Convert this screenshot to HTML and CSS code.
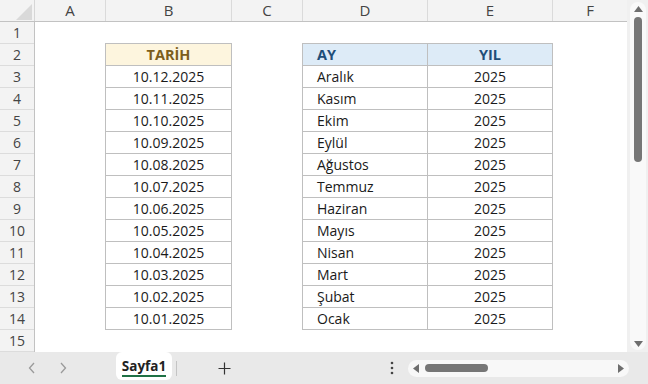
FILE: index.html
```html
<!DOCTYPE html>
<html lang="tr">
<head>
    <meta charset="UTF-8">
    <meta name="viewport" content="width=device-width, initial-scale=1.0">
    <title>Sayfa1</title>
    <link rel="stylesheet" href="styles.css">
</head>
<body>
    <div class="window">
        <div class="main">
            <div class="sheet">
                <!-- column letters -->
                <div class="colheads">
                    <div class="corner">
                        <svg width="16" height="16" viewBox="0 0 16 16"><polygon points="16,0 16,16 0,16" fill="#d9d9d9"/></svg>
                    </div>
                    <div class="colhead col-a">A</div>
                    <div class="colhead col-b">B</div>
                    <div class="colhead col-c">C</div>
                    <div class="colhead col-d">D</div>
                    <div class="colhead col-e">E</div>
                    <div class="colhead col-f">F</div>
                </div>

                <div class="body">
                    <div class="rowheads">
                        <div class="rowhead">1</div>
                        <div class="rowhead">2</div>
                        <div class="rowhead">3</div>
                        <div class="rowhead">4</div>
                        <div class="rowhead">5</div>
                        <div class="rowhead">6</div>
                        <div class="rowhead">7</div>
                        <div class="rowhead">8</div>
                        <div class="rowhead">9</div>
                        <div class="rowhead">10</div>
                        <div class="rowhead">11</div>
                        <div class="rowhead">12</div>
                        <div class="rowhead">13</div>
                        <div class="rowhead">14</div>
                        <div class="rowhead">15</div>
                    </div>

                    <div class="cells">
                        <!-- date table in column B -->
                        <div class="tbl tarih">
                            <div class="tc head-gold">TARİH</div>
                            <div class="tc">10.12.2025</div>
                            <div class="tc">10.11.2025</div>
                            <div class="tc">10.10.2025</div>
                            <div class="tc">10.09.2025</div>
                            <div class="tc">10.08.2025</div>
                            <div class="tc">10.07.2025</div>
                            <div class="tc">10.06.2025</div>
                            <div class="tc">10.05.2025</div>
                            <div class="tc">10.04.2025</div>
                            <div class="tc">10.03.2025</div>
                            <div class="tc">10.02.2025</div>
                            <div class="tc">10.01.2025</div>
                        </div>

                        <!-- month / year table in columns D-E -->
                        <div class="tbl months">
                            <div class="tc head-blue left">AY</div>
                            <div class="tc head-blue">YIL</div>
                            <div class="tc left">Aralık</div><div class="tc">2025</div>
                            <div class="tc left">Kasım</div><div class="tc">2025</div>
                            <div class="tc left">Ekim</div><div class="tc">2025</div>
                            <div class="tc left">Eylül</div><div class="tc">2025</div>
                            <div class="tc left">Ağustos</div><div class="tc">2025</div>
                            <div class="tc left">Temmuz</div><div class="tc">2025</div>
                            <div class="tc left">Haziran</div><div class="tc">2025</div>
                            <div class="tc left">Mayıs</div><div class="tc">2025</div>
                            <div class="tc left">Nisan</div><div class="tc">2025</div>
                            <div class="tc left">Mart</div><div class="tc">2025</div>
                            <div class="tc left">Şubat</div><div class="tc">2025</div>
                            <div class="tc left">Ocak</div><div class="tc">2025</div>
                        </div>
                    </div>
                </div>
            </div>

            <!-- vertical scrollbar -->
            <div class="vscroll">
                <div class="vtrack">
                    <svg width="9" height="6" viewBox="0 0 9 6"><polygon points="4.5,0 9,6 0,6" fill="#6e6e6e"/></svg>
                    <div class="vthumb"></div>
                    <svg class="vdown" width="9" height="6" viewBox="0 0 9 6"><polygon points="0,0 9,0 4.5,6" fill="#6e6e6e"/></svg>
                </div>
            </div>
        </div>

        <!-- sheet tabs -->
        <div class="tabbar">
            <div class="nav">
                <svg width="8" height="12" viewBox="0 0 8 12"><polyline points="6,1 1.5,6 6,11" fill="none" stroke="#9a9a9a" stroke-width="1.3"/></svg>
                <svg width="8" height="12" viewBox="0 0 8 12"><polyline points="2,1 6.5,6 2,11" fill="none" stroke="#9a9a9a" stroke-width="1.3"/></svg>
            </div>
            <div class="tab"><span class="tab-label">Sayfa1</span></div>
            <div class="tab-sep"></div>
            <svg class="add" width="13" height="13" viewBox="0 0 13 13"><path d="M6.5 0.5v12M0.5 6.5h12" stroke="#333" stroke-width="1.2"/></svg>
            <div class="spacer"></div>
            <svg class="more" width="4" height="14" viewBox="0 0 4 14"><circle cx="2" cy="2" r="1.3" fill="#444"/><circle cx="2" cy="7" r="1.3" fill="#444"/><circle cx="2" cy="12" r="1.3" fill="#444"/></svg>
            <div class="hscroll">
                <svg width="6" height="9" viewBox="0 0 6 9"><polygon points="0,4.5 6,0 6,9" fill="#6e6e6e"/></svg>
                <div class="hthumb"></div>
                <div class="spacer"></div>
                <svg width="6" height="9" viewBox="0 0 6 9"><polygon points="0,0 6,4.5 0,9" fill="#6e6e6e"/></svg>
            </div>
        </div>
    </div>
</body>
</html>
```

FILE: styles.css
```css
body {
    margin: 0;
    font-family: "Open Sans", "Noto Sans", sans-serif;
}
.window {
    width: 648px;
    height: 384px;
    display: flex;
    flex-direction: column;
    background: #fff;
    overflow: hidden;
}
.main {
    display: flex;
    height: 352px;
}
.sheet {
    flex: 1;
    display: flex;
    flex-direction: column;
}

/* column headers */
.colheads {
    display: flex;
    height: 22px;
    box-sizing: border-box;
    background: #f3f3f3;
    border-bottom: 1px solid #c2c2c2;
}
.corner {
    width: 35px;
    box-sizing: border-box;
    border-right: 1px solid #d6d6d6;
    display: flex;
    align-items: flex-end;
    justify-content: flex-end;
    padding: 0 2px 1px 0;
}
.colhead {
    box-sizing: border-box;
    border-right: 1px solid #dadada;
    text-align: center;
    font-size: 15px;
    line-height: 21px;
    color: #444;
}
.col-a { width: 71px; }
.col-b { width: 126px; }
.col-c { width: 71px; }
.col-d { width: 125px; }
.col-e { width: 125px; }
.col-f { flex: 1; border-right: none; }

/* row headers + cells */
.body {
    display: flex;
    flex: 1;
}
.rowheads {
    width: 35px;
    box-sizing: border-box;
    background: #f3f3f3;
    border-right: 1px solid #c2c2c2;
}
.rowhead {
    height: 22px;
    box-sizing: border-box;
    border-bottom: 1px solid #dcdcdc;
    text-align: center;
    font-size: 14px;
    line-height: 21px;
    color: #444;
}
.cells {
    flex: 1;
    display: grid;
    grid-template-columns: 71px 126px 71px 125px 125px 1fr;
    grid-template-rows: repeat(15, 22px);
}

.tbl {
    display: grid;
    grid-auto-rows: 22px;
    margin: -1px 0 0 -1px;
    border-top: 1px solid #bfbfbf;
    border-left: 1px solid #bfbfbf;
}
.tarih {
    grid-column: 2;
    grid-row: 2 / span 13;
}
.months {
    grid-column: 4 / span 2;
    grid-row: 2 / span 13;
    grid-template-columns: 1fr 1fr;
}
.tc {
    border-right: 1px solid #bfbfbf;
    border-bottom: 1px solid #bfbfbf;
    font-size: 14px;
    line-height: 21px;
    text-align: center;
    color: #1a1a1a;
}
.tc.left {
    text-align: left;
    padding-left: 14px;
}
.head-gold {
    background: #fdf5de;
    color: #7c5e1c;
    font-weight: bold;
    font-size: 14.5px;
}
.head-blue {
    background: #ddebf7;
    color: #1f4e78;
    font-weight: bold;
    font-size: 14.5px;
}

/* vertical scrollbar */
.vscroll {
    width: 21px;
    background: #f0f0f0;
    padding: 2px 2px 2px 3px;
    box-sizing: border-box;
}
.vtrack {
    height: 100%;
    background: #f9f9f9;
    border-radius: 8px;
    display: flex;
    flex-direction: column;
    align-items: center;
    padding: 4px 0 3px;
    box-sizing: border-box;
}
.vthumb {
    width: 8px;
    height: 145px;
    margin-top: 5px;
    background: #767676;
    border-radius: 4px;
}
.vdown {
    margin-top: auto;
}

/* sheet tabs bar */
.tabbar {
    height: 32px;
    background: #e9e9e9;
    display: flex;
    align-items: center;
}
.nav {
    width: 116px;
    display: flex;
    gap: 23px;
    padding-left: 28px;
    box-sizing: border-box;
}
.tab {
    align-self: flex-start;
    width: 56px;
    height: 28px;
    background: #fff;
    border-radius: 6px;
    display: flex;
    justify-content: center;
    align-items: center;
}
.tab-label {
    font-size: 13.5px;
    font-weight: bold;
    color: #222;
    border-bottom: 2px solid #1e7145;
    line-height: 18px;
    margin-top: 2px;
}
.tab-sep {
    width: 1px;
    height: 15px;
    background: #c4c4c4;
    margin-left: 4px;
}
.add {
    margin-left: 41px;
}
.spacer {
    flex: 1;
}
.more {
    margin-right: 14px;
}
.hscroll {
    width: 221px;
    height: 17px;
    margin-right: 19px;
    background: #f8f8f8;
    border-radius: 9px;
    display: flex;
    align-items: center;
    padding: 0 5px;
    box-sizing: border-box;
}
.hthumb {
    width: 63px;
    height: 8px;
    margin-left: 6px;
    background: #767676;
    border-radius: 4px;
}
```
